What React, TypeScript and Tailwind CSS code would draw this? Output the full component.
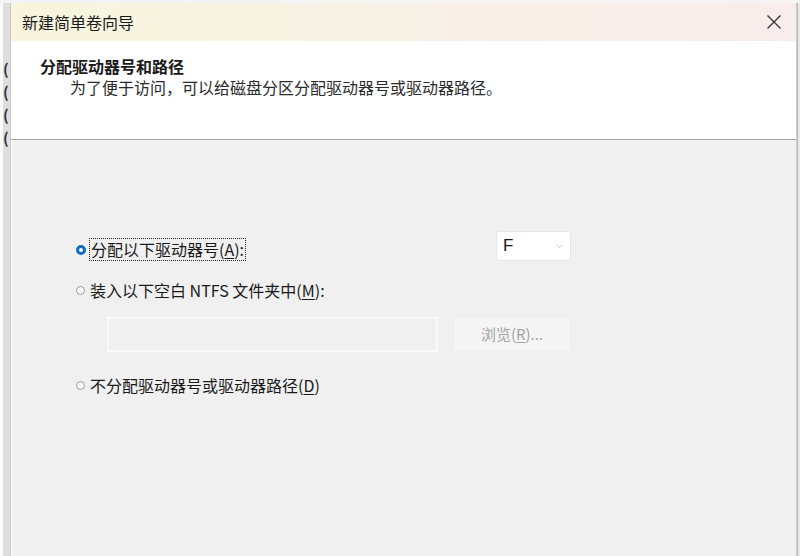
import { ChevronDown } from 'lucide-react';

const cjk = { fontFamily: '"Noto Sans CJK SC", "Noto Sans", sans-serif' };

function Radio({ checked }: { checked?: boolean }) {
  return checked ? (
    <span className="w-[10px] h-[10px] rounded-full border-[3px] border-[#0f6cbd] bg-white shrink-0" />
  ) : (
    <span className="w-[9px] h-[9px] rounded-full border border-[#9a9a9a] bg-[#f8f8f8] shrink-0" />
  );
}

export default function App() {
  return (
    <div
      className="w-[800px] h-[556px] flex pt-[3px] bg-[#f4f4f4] overflow-hidden text-[#1a1a1a]"
      style={cjk}
    >
      {/* background window peeking out on the left */}
      <div className="w-[10px] shrink-0 flex flex-col bg-[#dedede] border-l-[3px] border-[#fafafa] pt-[57px] gap-[6px] text-[#333] text-[15px] leading-[17px] font-bold">
        <span>(</span>
        <span>(</span>
        <span>(</span>
        <span>(</span>
      </div>

      {/* dialog */}
      <div className="w-[787px] shrink-0 flex flex-col border-l border-r border-[#c9c9c9]">
        {/* title bar */}
        <div className="h-[38px] shrink-0 flex items-center justify-between pl-[11px] pr-[14px] bg-gradient-to-r from-[#f7f5dd] via-[#f8f1e6] to-[#f9ecec]">
          <span className="text-[16px]">新建简单卷向导</span>
          <svg width="16" height="16" viewBox="0 0 16 16" className="text-[#333]">
            <path d="M1.5 1.5 L14.5 14.5 M14.5 1.5 L1.5 14.5" stroke="currentColor" strokeWidth="1.3" fill="none" />
          </svg>
        </div>

        {/* header */}
        <div className="h-[99px] shrink-0 bg-white border-b border-[#a3a3a3] flex flex-col pt-[15px] pl-[29px]">
          <span className="text-[16px] font-bold leading-[20px]">分配驱动器号和路径</span>
          <span className="text-[16px] leading-[22px] pl-[30px] text-[#2a2a2a]">
            为了便于访问，可以给磁盘分区分配驱动器号或驱动器路径。
          </span>
        </div>

        {/* body */}
        <div className="flex-1 bg-[#f0f0f0] border-l border-white flex flex-col pl-[64px] pt-[91px]">
          <div className="h-[31px] flex items-start">
            <div className="w-[420px] flex items-center mt-[8px]">
              <Radio checked />
              <span className="ml-[4px] px-[1px] outline outline-1 outline-dotted outline-[#222] text-[16px] leading-[21px]">
                分配以下驱动器号(<span className="underline underline-offset-2">A</span>):
              </span>
            </div>
            <div className="w-[75px] h-[30px] bg-white border border-[#e6e6e6] rounded-[3px] flex items-center justify-between pl-[6px] pr-[6px]">
              <span className="text-[17px]" style={{ fontFamily: '"Liberation Sans", sans-serif' }}>F</span>
              <ChevronDown className="w-[9px] h-[9px] text-[#aaa]" strokeWidth={2} />
            </div>
          </div>

          <div className="h-[24px] mt-[16px] flex items-center">
            <Radio />
            <span className="ml-[5px] text-[16px] leading-[21px]">
              装入以下空白 NTFS 文件夹中(<span className="underline underline-offset-2">M</span>):
            </span>
          </div>

          <div className="mt-[15px] ml-[31px] flex items-center gap-[16px]">
            <div className="w-[331px] h-[35px] border-2 border-[#f9f9f9] bg-[#f0f0f0]" />
            <div className="w-[116px] h-[33px] bg-[#f5f5f5] border border-[#f2f2f2] flex items-center justify-center text-[15px] text-[#a3a3a3]">
              浏览(<span className="underline underline-offset-2">R</span>)...
            </div>
          </div>

          <div className="h-[24px] mt-[21px] flex items-center">
            <Radio />
            <span className="ml-[5px] text-[16px] leading-[21px]">
              不分配驱动器号或驱动器路径(<span className="underline underline-offset-2">D</span>)
            </span>
          </div>
        </div>
      </div>

      {/* right edge of background window */}
      <div className="flex-1 bg-[#e8e8e8] border-l border-[#bdbdbd]" />
    </div>
  );
}
